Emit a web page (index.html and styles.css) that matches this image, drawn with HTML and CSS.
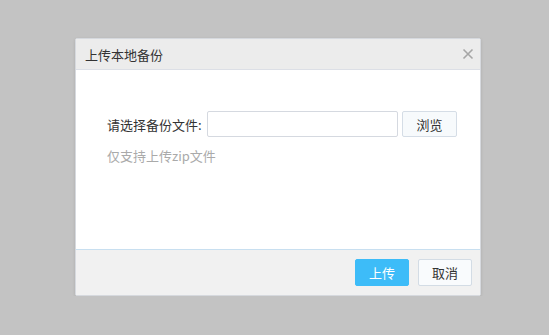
FILE: index.html
```html
<!DOCTYPE html>
<html lang="zh-CN">
  <head>
    <meta charset="UTF-8" />
    <meta name="viewport" content="width=device-width, initial-scale=1" />
    <title>上传本地备份</title>
    <link rel="stylesheet" href="styles.css">
  </head>
  <body>
    <div class="dialog">
      <div class="dialog-header">
        <span class="dialog-title">上传本地备份</span>
        <span class="dialog-close">
          <svg width="12" height="12" viewBox="0 0 12 12">
            <path d="M1.5 1.5 L10.5 10.5 M10.5 1.5 L1.5 10.5" stroke="#a6a6a6" stroke-width="1.6" fill="none" />
          </svg>
        </span>
      </div>
      <div class="dialog-body">
        <div class="file-row">
          <label class="file-label">请选择备份文件:</label>
          <input type="text" class="file-input" />
          <button class="btn-browse">浏览</button>
        </div>
        <div class="file-hint">仅支持上传zip文件</div>
      </div>
      <div class="dialog-footer">
        <button class="btn btn-primary">上传</button>
        <button class="btn btn-default">取消</button>
      </div>
    </div>
  </body>
</html>
```

FILE: styles.css
```css
body {
  margin: 0;
  padding: 0;
  background-color: #c3c3c3;
  font-family: "Noto Sans CJK SC", "Liberation Sans", sans-serif;
  font-size: 13px;
  color: #333;
}

.dialog {
  width: 404px;
  margin: 38px 0 0 75px;
  background-color: #fff;
  border: 1px solid #d6d9de;
  border-radius: 2px;
  box-shadow: 0 1px 3px rgba(0, 0, 0, 0.12);
}

.dialog-header {
  height: 30px;
  display: flex;
  align-items: center;
  justify-content: space-between;
  padding: 0 6px 0 9px;
  background-color: #ececec;
  border-bottom: 1px solid #dcdfe6;
}

.dialog-title {
  font-size: 13px;
  color: #333;
}

.dialog-close {
  display: flex;
  width: 12px;
  height: 12px;
}

.dialog-body {
  height: 179px;
  padding: 41px 0 0 31px;
  box-sizing: border-box;
}

.file-row {
  display: flex;
  align-items: center;
}

.file-label {
  width: 100px;
  font-size: 13px;
  color: #333;
}

.file-input {
  width: 191px;
  height: 26px;
  box-sizing: border-box;
  border: 1px solid #d5d9e0;
  border-radius: 2px;
  padding: 0 6px;
  margin: 0;
  outline: none;
}

.btn-browse {
  width: 55px;
  height: 26px;
  margin-left: 4px;
  border: 1px solid #d5dde6;
  border-radius: 2px;
  background-color: #f7fafc;
  font-family: inherit;
  font-size: 13px;
  color: #333;
  padding: 0;
}

.file-hint {
  margin-top: 9px;
  color: #aaa;
  font-size: 13px;
}

.dialog-footer {
  height: 45px;
  display: flex;
  justify-content: flex-end;
  align-items: center;
  gap: 9px;
  padding-right: 8px;
  background-color: #f1f1f1;
  border-top: 1px solid #c8dff0;
}

.btn {
  width: 54px;
  height: 27px;
  padding: 0;
  border-radius: 2px;
  font-family: inherit;
  font-size: 13px;
  cursor: pointer;
}

.btn-primary {
  background-color: #3dbcf8;
  border: 1px solid #3dbcf8;
  color: #fff;
}

.btn-default {
  background-color: #f9fbfd;
  border: 1px solid #d3dce5;
  color: #333;
}
```
